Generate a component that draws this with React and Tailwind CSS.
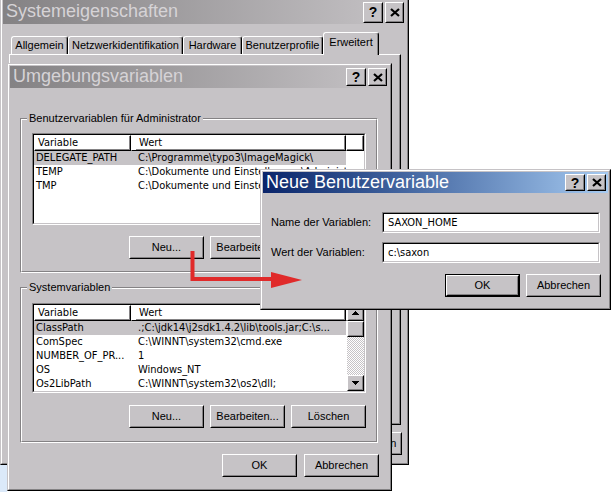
import React from "react";

const SANS = "font-['Liberation_Sans',Arial,sans-serif]";
const TAHOMA = "font-['DejaVu_Sans_Condensed','Liberation_Sans',sans-serif]";

function Raised({ className = "", inner = "", children }) {
  return (
    <div className={`shrink-0 border border-t-white border-l-white border-r-black border-b-black bg-[#c6c3c6] ${className}`}>
      <div className={`flex h-full w-full items-center justify-center border border-t-[#c6c3c6] border-l-[#c6c3c6] border-r-[#848284] border-b-[#848284] ${inner}`}>
        {children}
      </div>
    </div>
  );
}

function Sunken({ className = "", inner = "", children }) {
  return (
    <div className={`shrink-0 border border-t-[#848284] border-l-[#848284] border-r-white border-b-white ${className}`}>
      <div className={`h-full w-full border border-t-black border-l-black border-r-[#c6c3c6] border-b-[#c6c3c6] bg-white ${inner}`}>
        {children}
      </div>
    </div>
  );
}

function Button({ children, className = "" }) {
  return <Raised className={`h-[23px] w-[75px] ${className}`}>{children}</Raised>;
}

function CloseGlyph() {
  return (
    <svg width="10" height="9" viewBox="0 0 10 9">
      <path d="M1 1 L9 8 M9 1 L1 8" stroke="black" strokeWidth="2.2" />
    </svg>
  );
}

function TitleBar({ title, active, className = "", btn = "h-[18px]" }) {
  const bg = active
    ? "bg-linear-to-r from-[#0a246a] to-[#a6caf0] text-white"
    : "bg-linear-to-r from-[#848284] to-[#c6c3c6] text-[#d6d3d6]";
  return (
    <div className={`flex shrink-0 items-center justify-between pl-[3px] pr-[2px] ${bg} ${className}`}>
      <span className={`${SANS} pb-[2px] text-[18px] leading-none`}>{title}</span>
      <div className="flex gap-[2px]">
        <Raised className={`w-[20px] ${btn}`}>
          <span className={`${SANS} text-[14px] font-bold leading-none text-black`}>?</span>
        </Raised>
        <Raised className={`w-[19px] ${btn}`}>
          <CloseGlyph />
        </Raised>
      </div>
    </div>
  );
}

function Frame({ className = "", children }) {
  return (
    <div className={`absolute border border-t-[#c6c3c6] border-l-[#c6c3c6] border-r-black border-b-black ${className}`}>
      <div className="flex h-full flex-col border border-t-white border-l-white border-r-[#848284] border-b-[#848284] bg-[#c6c3c6] p-px">
        {children}
      </div>
    </div>
  );
}

function Group({ label, className = "", inner = "", children }) {
  return (
    <div className={`relative shrink-0 border border-t-[#848284] border-l-[#848284] border-r-white border-b-white ${className}`}>
      <div className={`flex h-full flex-col border border-t-white border-l-white border-r-[#848284] border-b-[#848284] ${inner}`}>
        {children}
      </div>
      <span className="absolute left-[6px] top-[-7px] bg-[#c6c3c6] px-[2px] leading-[13px]">{label}</span>
    </div>
  );
}

function HeadCell({ className = "", children }) {
  return (
    <div className={`h-full shrink-0 border border-t-white border-l-white border-r-black border-b-black`.concat(" ", className)}>
      <div className="h-full border-r border-b border-r-[#848284] border-b-[#848284] pl-[3px] leading-[13px]">{children}</div>
    </div>
  );
}

function Arrow({ down }) {
  return (
    <svg width="7" height="4" viewBox="0 0 7 4" shapeRendering="crispEdges">
      <polygon points={down ? "0,0 7,0 3.5,4" : "3.5,0 7,4 0,4"} fill="black" />
    </svg>
  );
}

function Scrollbar() {
  return (
    <div className="flex w-[17px] shrink-0 flex-col">
      <Raised className="h-[16px] w-[17px]">
        <Arrow />
      </Raised>
      <Raised className="h-[16px] w-[17px]" />
      <div className="flex-1 bg-[image:repeating-conic-gradient(#ffffff_0_25%,#c6c3c6_0_50%)] bg-[length:2px_2px]" />
      <Raised className="h-[16px] w-[17px]">
        <Arrow down />
      </Raised>
    </div>
  );
}

function ListView({ rows, scroll, className = "" }) {
  return (
    <Sunken className={`w-[334px] ${className}`} inner={`flex overflow-hidden ${TAHOMA}`}>
      <div className="min-w-0 flex-1">
        <div className="flex h-[16px]">
          <HeadCell className="w-[97px]">Variable</HeadCell>
          <HeadCell className="w-[215px] pl-[4px]">Wert</HeadCell>
          <HeadCell className="min-w-0 flex-1" />
        </div>
        {rows.map(([name, value, selected]) => (
          <div key={name} className={`flex h-[14px] w-[312px] leading-[14px] ${selected ? "bg-[#c6c3c6]" : ""}`}>
            <div className="w-[97px] shrink-0 overflow-hidden whitespace-nowrap pl-[2px]">{name}</div>
            <div className="w-[215px] shrink-0 overflow-hidden whitespace-nowrap pl-[7px]">{value}</div>
          </div>
        ))}
      </div>
      {scroll && <Scrollbar />}
    </Sunken>
  );
}

function Tab({ label, className = "", selected }) {
  return (
    <div
      className={`flex shrink-0 items-center justify-center rounded-t-[3px] border-t border-l border-r border-t-white border-l-white border-r-black shadow-[inset_-1px_0_0_#848284] ${
        selected ? "z-10 -mb-px h-[23px] bg-[#c6c3c6] pb-[3px]" : "h-[18px]"
      } ${className}`}
    >
      {label}
    </div>
  );
}

const userVars = [
  ["DELEGATE_PATH", "C:\\Programme\\typo3\\ImageMagick\\", true],
  ["TEMP", "C:\\Dokumente und Einstellungen\\Administrator\\Lokale...", false],
  ["TMP", "C:\\Dokumente und Einstellungen\\Administrator\\Lokale...", false],
];

const sysVars = [
  ["ClassPath", ".;C:\\jdk14\\j2sdk1.4.2\\lib\\tools.jar;C:\\s...", true],
  ["ComSpec", "C:\\WINNT\\system32\\cmd.exe", false],
  ["NUMBER_OF_PR...", "1", false],
  ["OS", "Windows_NT", false],
  ["Os2LibPath", "C:\\WINNT\\system32\\os2\\dll;", false],
];

export default function App() {
  return (
    <div className={`relative h-[492px] w-[611px] overflow-hidden bg-white text-[11px] text-black ${SANS}`}>
      <div className="absolute left-0 top-[465px] h-[27px] w-[7px] bg-[#dbe9f9]" />

      {/* Systemeigenschaften */}
      <Frame className="left-0 top-[-3px] h-[468px] w-[409px]">
        <TitleBar title="Systemeigenschaften" className="h-[24px]" btn="h-[21px]" />
        <div className="ml-[8px] mt-[8px] flex items-end">
          <Tab label="Allgemein" className="w-[57px]" />
          <Tab label="Netzwerkidentifikation" className="w-[115px]" />
          <Tab label="Hardware" className="w-[59px]" />
          <Tab label="Benutzerprofile" className="w-[81px]" />
          <Tab label="Erweitert" className="w-[56px]" selected />
        </div>
        <div className="ml-[6px] mr-[5px] h-[371px] shrink-0 border border-t-white border-l-white border-r-black border-b-black shadow-[inset_-1px_-1px_0_#848284]" />
        <div className="mr-[4px] mt-[7px] flex justify-end gap-[4px]">
          <Button>OK</Button>
          <Button>Abbrechen</Button>
          <Button>Übernehmen</Button>
        </div>
      </Frame>

      {/* Umgebungsvariablen */}
      <Frame className="left-[7px] top-[63px] h-[428px] w-[385px]">
        <TitleBar title="Umgebungsvariablen" className="h-[22px]" />
        <Group label="Benutzervariablen für Administrator" className="ml-[10px] mt-[30px] h-[155px] w-[358px]" inner="pl-[10px] pt-[13px]">
          <ListView rows={userVars} className="h-[92px]" />
          <div className="mt-[11px] flex w-[334px] justify-end gap-[6px]">
            <Button>Neu...</Button>
            <Button>Bearbeiten...</Button>
            <Button>Löschen</Button>
          </div>
        </Group>
        <Group label="Systemvariablen" className="ml-[10px] mt-[14px] h-[156px] w-[358px]" inner="pl-[10px] pt-[14px]">
          <ListView rows={sysVars} scroll className="h-[90px]" />
          <div className="mt-[12px] flex w-[334px] justify-end gap-[6px]">
            <Button>Neu...</Button>
            <Button>Bearbeiten...</Button>
            <Button>Löschen</Button>
          </div>
        </Group>
        <div className="mr-[10px] mt-[11px] flex justify-end gap-[7px]">
          <Button>OK</Button>
          <Button>Abbrechen</Button>
        </div>
      </Frame>

      {/* Neue Benutzervariable */}
      <Frame className="left-[260px] top-[169px] h-[141px] w-[351px]">
        <TitleBar title="Neue Benutzervariable" active className="h-[21px]" btn="h-[17px]" />
        <div className="mt-[19px] flex flex-col gap-[9px] pl-[8px]">
          <div className="flex items-center">
            <span className="w-[111px]">Name der Variablen:</span>
            <Sunken className="h-[21px] w-[218px]" inner={`pl-[4px] leading-[17px] ${TAHOMA}`}>SAXON_HOME</Sunken>
          </div>
          <div className="flex items-center">
            <span className="w-[111px]">Wert der Variablen:</span>
            <Sunken className="h-[21px] w-[218px]" inner={`pl-[4px] leading-[17px] ${TAHOMA}`}>c:\saxon</Sunken>
          </div>
        </div>
        <div className="mr-[7px] mt-[11px] flex justify-end gap-[6px]">
          <div className="border border-black">
            <Raised className="h-[21px] w-[73px]">OK</Raised>
          </div>
          <Button>Abbrechen</Button>
        </div>
      </Frame>

      <svg className="pointer-events-none absolute left-0 top-0 z-30" width="611" height="492" viewBox="0 0 611 492">
        <path d="M192.5 251 V279 H274" fill="none" stroke="#e02a2a" strokeWidth="4" />
        <polygon points="271,272 302,280 271,288" fill="#e02a2a" />
      </svg>
    </div>
  );
}
